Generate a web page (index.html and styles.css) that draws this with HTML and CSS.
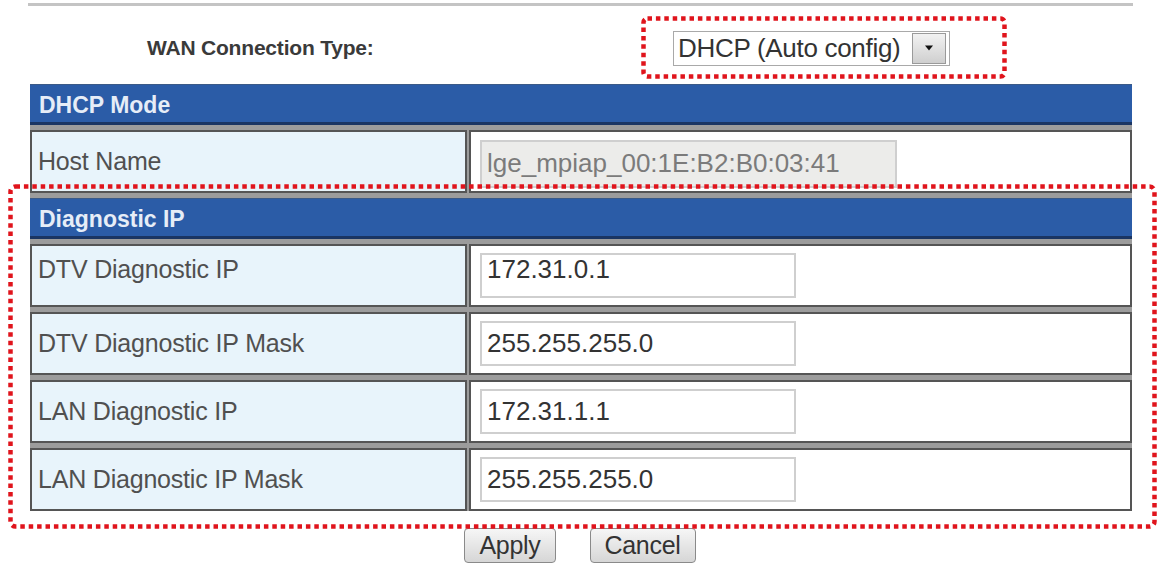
FILE: index.html
```html
<!DOCTYPE html>
<html>
<head>
<meta charset="utf-8">
<link rel="stylesheet" href="styles.css">
</head>
<body>
<div class="page">
  <div class="topline"></div>
  <div class="wan">
    <div class="wan-label">WAN Connection Type:</div>
    <div class="wan-field">
      <div class="select">
        <span class="select-text">DHCP (Auto config)</span>
        <span class="select-btn"><svg width="12" height="8" viewBox="0 0 12 8"><path d="M2 1.5 L10 1.5 L6 6.5 Z" fill="#111"/></svg></span>
      </div>
    </div>
  </div>

  <div class="grid">
    <div class="head">DHCP Mode</div>
    <div class="lbl">Host Name</div>
    <div class="val"><div class="input input-wide input-disabled">lge_mpiap_00:1E:B2:B0:03:41</div></div>

    <div class="head">Diagnostic IP</div>
    <div class="lbl lbl-raised">DTV Diagnostic IP</div>
    <div class="val"><div class="input input-raised">172.31.0.1</div></div>
    <div class="lbl">DTV Diagnostic IP Mask</div>
    <div class="val"><div class="input">255.255.255.0</div></div>
    <div class="lbl">LAN Diagnostic IP</div>
    <div class="val"><div class="input">172.31.1.1</div></div>
    <div class="lbl">LAN Diagnostic IP Mask</div>
    <div class="val"><div class="input">255.255.255.0</div></div>
  </div>

  <div class="buttons">
    <button class="btn">Apply</button>
    <button class="btn">Cancel</button>
  </div>

  <svg class="mark mark-select" width="366" height="63" viewBox="0 0 366 63">
    <rect x="2.5" y="2.5" width="361" height="58" rx="4" class="dots"/>
  </svg>
  <svg class="mark mark-diag" width="1149" height="345" viewBox="0 0 1149 345">
    <rect x="2.5" y="2.5" width="1144" height="340" rx="5" class="dots"/>
  </svg>
</div>
</body>
</html>
```

FILE: styles.css
```css
html, body {
  margin: 0;
  padding: 0;
  background: #ffffff;
}

.page {
  position: relative;
  width: 1165px;
  height: 570px;
  overflow: hidden;
  font-family: "Liberation Sans", Arial, sans-serif;
  color: #4f4f4f;
}

.topline {
  margin: 3px 0 0 28px;
  width: 1105px;
  height: 3px;
  background: #c4c4c4;
}

.wan {
  display: grid;
  grid-template-columns: 439px 663px;
  margin-left: 30px;
  height: 72px;
  padding-top: 6px;
  align-items: center;
}

.wan-label {
  padding-left: 117px;
  font-size: 21px;
  font-weight: bold;
  color: #3a3a3a;
  letter-spacing: -0.2px;
}

.wan-field {
  padding-left: 204px;
}

.select {
  display: flex;
  align-items: center;
  justify-content: space-between;
  width: 268px;
  height: 33px;
  border: 1px solid #a9a9a9;
  background: #fff;
  padding: 0 3px 0 4px;
  box-sizing: content-box;
}

.select-text {
  font-size: 26px;
  color: #333;
  letter-spacing: -0.3px;
}

.select-btn {
  display: flex;
  align-items: center;
  justify-content: center;
  width: 32px;
  height: 29px;
  border: 1px solid #9a9a9a;
  background: linear-gradient(#f2f2f2, #cfcfcf);
}

.grid {
  display: grid;
  grid-template-columns: 437px 663px;
  column-gap: 2px;
  row-gap: 5px;
  margin-left: 30px;
  width: 1102px;
  background: #9c9c9c;
}

.head {
  grid-column: 1 / 3;
  height: 41px;
  box-sizing: border-box;
  background: #2b5ca7;
  border-top: 1px solid #3b5a87;
  border-bottom: 3px solid #1a3563;
  color: #e6edf7;
  font-size: 23px;
  font-weight: bold;
  display: flex;
  align-items: center;
  padding-left: 9px;
  padding-top: 3px;
}

.lbl, .val {
  height: 63px;
  box-sizing: border-box;
  border: 2px solid #555;
  display: flex;
  align-items: center;
}

.lbl {
  background: #e8f4fb;
  padding-left: 6px;
  font-size: 25px;
  color: #505050;
  letter-spacing: -0.2px;
}

.lbl-raised {
  padding-bottom: 12px;
}

.val {
  background: #fff;
  padding-left: 9px;
}

.input {
  width: 316px;
  height: 45px;
  box-sizing: border-box;
  border: 2px solid #cfcfcf;
  background: #fff;
  font-size: 26px;
  color: #333;
  padding-left: 5px;
  display: flex;
  align-items: center;
}

.input-raised {
  padding-bottom: 12px;
}

.input-wide {
  width: 417px;
  height: 48px;
  margin-top: 4px;
}

.input-disabled {
  background: #ececea;
  color: #7b7b7b;
}

.buttons {
  display: flex;
  justify-content: center;
  gap: 34px;
  margin-top: 17px;
  padding-right: 5px;
}

.btn {
  font-family: "Liberation Sans", Arial, sans-serif;
  font-size: 25px;
  color: #333;
  height: 35px;
  padding: 0 14px;
  border: 1px solid #8a8a8a;
  border-radius: 4px;
  background: linear-gradient(#f6f6f6, #d6d6d6);
  letter-spacing: -0.3px;
}

.mark {
  position: absolute;
  overflow: visible;
}

.dots {
  fill: none;
  stroke: #e0141c;
  stroke-width: 4.5;
  stroke-dasharray: 4.5 3.9;
}

.mark-select {
  left: 641px;
  top: 16px;
}

.mark-diag {
  left: 8px;
  top: 184px;
}
```
